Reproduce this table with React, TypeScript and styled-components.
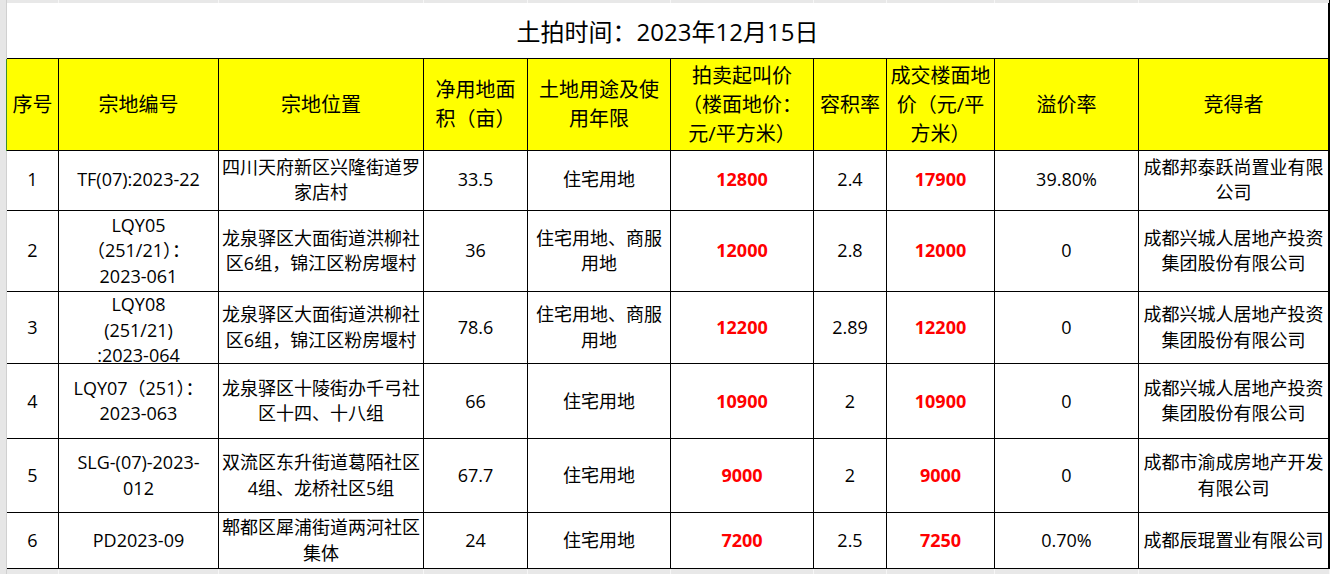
import React from "react";
import styled, { createGlobalStyle } from "styled-components";

const COLS = [52, 160, 205, 104, 143, 143, 73, 108, 144, 191];
const TEMPLATE = `7px ${COLS.map((c) => `${c}px`).join(" ")}`;

const Global = createGlobalStyle`
  html, body { margin: 0; padding: 0; background: #ececec; }
  body { font-family: "Open Sans", "Noto Sans CJK SC", sans-serif; color: #000; }
  * { box-sizing: border-box; }
`;

const Sheet = styled.div`
  display: flex;
  flex-direction: column;
  width: 1330px;
  height: 574px;
  overflow: hidden;
`;

const Row = styled.div<{ $h: number }>`
  display: grid;
  grid-template-columns: ${TEMPLATE};
  height: ${(p) => p.$h}px;
`;

const Gutter = styled.div<{ $sel?: boolean }>`
  background: #e6e6e6;
  border-right: 1px solid ${(p) => (p.$sel ? "#3f8f2f" : "#d0d0d0")};
`;

const EdgeCell = styled.div<{ $last?: boolean }>`
  background: #e8e8e8;
  border-right: 1px solid ${(p) => (p.$last ? "#000" : "#f6f6f6")};
`;

const TitleCell = styled.div`
  grid-column: span 10;
  background: #fff;
  border-right: 2px solid #000;
  border-bottom: 1px solid #000;
  display: flex;
  align-items: center;
  justify-content: center;
  padding-top: 3px;
  font-size: 24px;
  line-height: 30px;
  color: #000;
`;

const Cell = styled.div<{ $last?: boolean; $head?: boolean; $red?: boolean }>`
  background: ${(p) => (p.$head ? "#ffff00" : "#fff")};
  border-right: ${(p) => (p.$last ? 2 : 1)}px solid #000;
  border-bottom: 1px solid #000;
  display: flex;
  align-items: safe center;
  justify-content: center;
  text-align: center;
  white-space: pre;
  overflow: hidden;
  font-size: ${(p) => (p.$head ? 20 : 18)}px;
  line-height: ${(p) => (p.$head ? 29 : 25.5)}px;
  color: ${(p) => (p.$red ? "#ff0000" : "#000")};
  font-weight: ${(p) => (p.$red ? 700 : 400)};
`;

const headers = [
  "序号",
  "宗地编号",
  "宗地位置",
  "净用地面\n积（亩）",
  "土地用途及使\n用年限",
  "拍卖起叫价\n（楼面地价：\n元/平方米）",
  "容积率",
  "成交楼面地\n价（元/平\n方米）",
  "溢价率",
  "竞得者",
];

const RED_COLS = [5, 7];

const rows: { h: number; cells: string[] }[] = [
  {
    h: 60,
    cells: ["1", "TF(07):2023-22", "四川天府新区兴隆街道罗\n家店村", "33.5", "住宅用地", "12800", "2.4", "17900", "39.80%", "成都邦泰跃尚置业有限\n公司"],
  },
  {
    h: 82,
    cells: ["2", "LQY05\n（251/21）：\n2023-061", "龙泉驿区大面街道洪柳社\n区6组，锦江区粉房堰村", "36", "住宅用地、商服\n用地", "12000", "2.8", "12000", "0", "成都兴城人居地产投资\n集团股份有限公司"],
  },
  {
    h: 72,
    cells: ["3", "LQY08\n(251/21)\n:2023-064", "龙泉驿区大面街道洪柳社\n区6组，锦江区粉房堰村", "78.6", "住宅用地、商服\n用地", "12200", "2.89", "12200", "0", "成都兴城人居地产投资\n集团股份有限公司"],
  },
  {
    h: 75,
    cells: ["4", "LQY07（251）：\n2023-063", "龙泉驿区十陵街办千弓社\n区十四、十八组", "66", "住宅用地", "10900", "2", "10900", "0", "成都兴城人居地产投资\n集团股份有限公司"],
  },
  {
    h: 74,
    cells: ["5", "SLG-(07)-2023-\n012", "双流区东升街道葛陌社区\n4组、龙桥社区5组", "67.7", "住宅用地", "9000", "2", "9000", "0", "成都市渝成房地产开发\n有限公司"],
  },
  {
    h: 56,
    cells: ["6", "PD2023-09", "郫都区犀浦街道两河社区\n集体", "24", "住宅用地", "7200", "2.5", "7250", "0.70%", "成都辰琨置业有限公司"],
  },
];

function EdgeRow({ h, lastDark }: { h: number; lastDark?: boolean }) {
  return (
    <Row $h={h}>
      <Gutter />
      {COLS.map((_, i) => (
        <EdgeCell key={i} $last={lastDark && i === COLS.length - 1} />
      ))}
    </Row>
  );
}

export default function App() {
  return (
    <>
      <Global />
      <Sheet>
        <EdgeRow h={3} lastDark />
        <Row $h={56}>
          <Gutter />
          <TitleCell>土拍时间：2023年12月15日</TitleCell>
        </Row>
        <Row $h={92}>
          <Gutter $sel />
          {headers.map((t, i) => (
            <Cell key={i} $head $last={i === headers.length - 1}>
              {t}
            </Cell>
          ))}
        </Row>
        {rows.map((r, ri) => (
          <Row key={ri} $h={r.h}>
            <Gutter />
            {r.cells.map((t, i) => (
              <Cell key={i} $red={RED_COLS.includes(i)} $last={i === r.cells.length - 1}>
                {t}
              </Cell>
            ))}
          </Row>
        ))}
        <EdgeRow h={5} />
      </Sheet>
    </>
  );
}
